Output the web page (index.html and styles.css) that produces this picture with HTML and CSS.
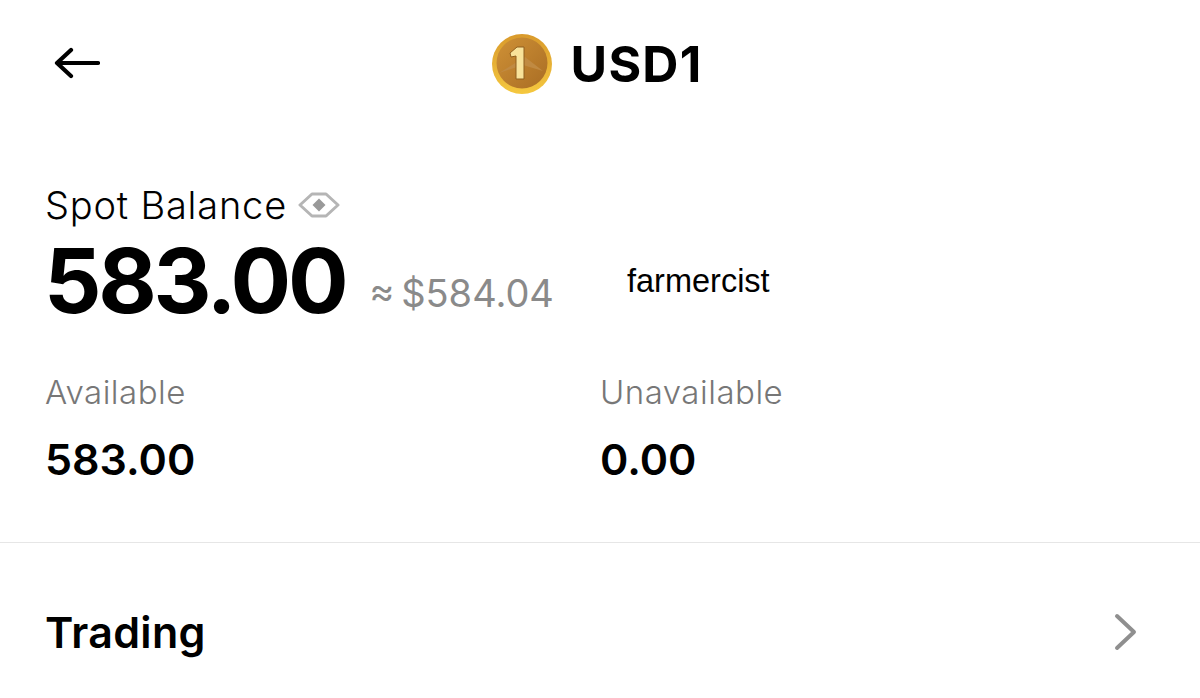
FILE: index.html
```html
<!DOCTYPE html>
<html lang="en">
<head>
	<meta charset="UTF-8">
	<title>USD1</title>
	<link rel="stylesheet" href="styles.css">
</head>
<body>
	<div id="container">
		<div class="top-bar">
			<svg class="back-icon" width="46" height="32" viewBox="0 0 46 32">
				<path d="M44 16H3M17 3L3 16l14 13" fill="none" stroke="#000" stroke-width="4.200" stroke-linecap="round" stroke-linejoin="round"/>
			</svg>
			<div class="coin-title">
				<svg class="coin" width="62" height="62" viewBox="0 0 62 62">
					<defs>
						<linearGradient id="rim" x1="0" y1="0" x2="0" y2="1">
							<stop offset="0" stop-color="#d99a2c"/>
							<stop offset="1" stop-color="#f5c83f"/>
						</linearGradient>
						<linearGradient id="face" x1="0" y1="0" x2="1" y2="1">
							<stop offset="0" stop-color="#cf9136"/>
							<stop offset="1" stop-color="#a96d24"/>
						</linearGradient>
					</defs>
					<circle cx="31" cy="31" r="30" fill="url(#rim)"/>
					<circle cx="31" cy="30" r="25.500" fill="url(#face)"/>
					<path d="M8 40L34 24l18 14-20-6z" fill="#c08a42"/>
					<path d="M19 20l7-6h7v32h-8V23l-5 1z" fill="#f8e29a" stroke="#8f5e1e" stroke-width="1" stroke-linejoin="round"/>
				</svg>
				<span class="coin-name">USD1</span>
			</div>
		</div>
		<div class="balance">
			<div class="balance-label">
				<span>Spot Balance</span>
				<svg width="42" height="28" viewBox="0 0 42 28">
					<path d="M2 14L14 3h14l12 11-12 11H14z" fill="none" stroke="#b5b5b5" stroke-width="3" stroke-linejoin="round"/>
					<path d="M21 7.500l6.500 6.500-6.500 6.500-6.500-6.500z" fill="#999"/>
				</svg>
			</div>
			<div class="balance-row">
				<span class="balance-amount">583.00</span>
				<span class="balance-usd">≈ $584.04</span>
			</div>
		</div>
		<div class="stats">
			<div class="stat">
				<p class="stat-label">Available</p>
				<p class="stat-value">583.00</p>
			</div>
			<div class="stat">
				<p class="stat-label">Unavailable</p>
				<p class="stat-value">0.00</p>
			</div>
		</div>
		<div class="trading-row">
			<span class="trading-title">Trading</span>
			<svg width="24" height="38" viewBox="0 0 24 38">
				<path d="M3 3l17 16L3 35" fill="none" stroke="#8f8f8f" stroke-width="4" stroke-linecap="round" stroke-linejoin="round"/>
			</svg>
		</div>
		<span class="watermark">farmercist</span>
	</div>
</body>
</html>
```

FILE: styles.css
```css
html, body {
	margin: 0;
	padding: 0;
	background-color: #fff;
}
#container {
	position: relative;
	height: 698px;
	overflow: hidden;
	font-family: "Inter", "Liberation Sans", sans-serif;
	color: #000;
}
.top-bar {
	position: relative;
	display: flex;
	justify-content: center;
	align-items: center;
	height: 62px;
	padding: 33px 7px 0 0;
}
.back-icon {
	position: absolute;
	left: 54px;
	top: 47px;
}
.coin-title {
	display: flex;
	align-items: center;
	gap: 18px;
}
.coin-name {
	font-size: 50px;
	font-weight: 700;
	letter-spacing: 1.200px;
}
.balance {
	padding: 85px 45px 0;
}
.balance-label {
	display: flex;
	align-items: center;
	gap: 11px;
	height: 50px;
	font-size: 38px;
	font-weight: 300;
	letter-spacing: 0.8px;
}
.balance-row {
	display: flex;
	align-items: center;
	height: 102px;
}
.balance-amount {
	margin-left: -1px;
	font-size: 90px;
	font-weight: 700;
	line-height: 98px;
	letter-spacing: -3.300px;
}
.balance-usd {
	margin: 24px 0 0 24px;
	font-size: 38px;
	font-weight: 400;
	word-spacing: -4px;
	color: #8a8a8a;
}
.watermark {
	position: absolute;
	left: 627px;
	top: 263px;
	font-family: "Liberation Sans", sans-serif;
	font-size: 32.500px;
}
.stats {
	display: grid;
	grid-template-columns: 555px 1fr;
	padding: 38px 45px 0;
}
.stat-label {
	margin: 0;
	font-size: 33px;
	font-weight: 300;
	line-height: 44px;
	letter-spacing: 0.5px;
	color: #777;
}
.stat-value {
	margin: 20px 0 0;
	font-size: 43px;
	font-weight: 600;
	line-height: 50px;
}
.trading-row {
	display: flex;
	justify-content: space-between;
	align-items: center;
	margin-top: 58px;
	padding: 59px 62px 0 45px;
	border-top: 1px solid #e6e6e6;
}
.trading-title {
	font-size: 43px;
	font-weight: 600;
	line-height: 60px;
	letter-spacing: 0.3px;
}
```
